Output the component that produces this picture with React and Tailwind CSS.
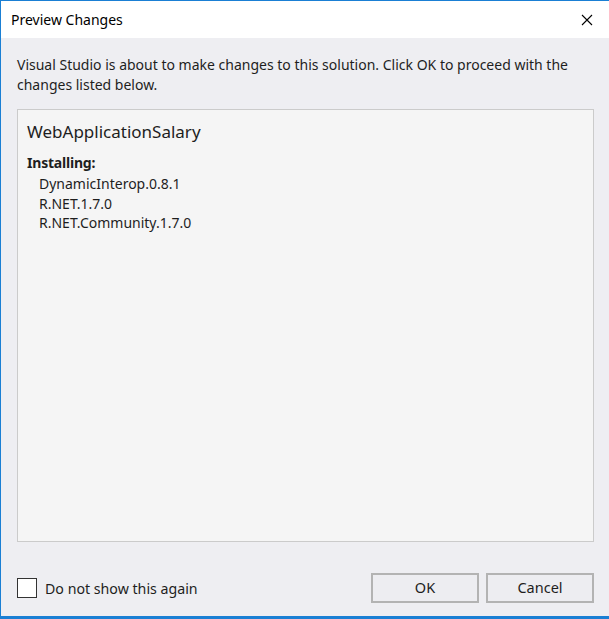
import React from 'react'

const font = { fontFamily: '"Noto Sans", "Open Sans", sans-serif' }

function App() {
  const packages = ['DynamicInterop.0.8.1', 'R.NET.1.7.0', 'R.NET.Community.1.7.0']

  return (
    <div className="w-[609px] h-[619px] overflow-hidden bg-[#eeeef2]">
      <div
        className="flex flex-col h-full border-l border-t border-b-[3px] border-[#1a7fd4] bg-[#eeeef2] text-[#1e1e1e]"
        style={font}
      >
        {/* Title bar */}
        <div className="flex items-center justify-between h-[37px] bg-white pl-[10px] pr-[15px]">
          <span className="text-[14px] text-black">Preview Changes</span>
          <svg width="12" height="12" viewBox="0 0 12 12" className="mr-[1px]">
            <path d="M1 1 L11 11 M11 1 L1 11" stroke="#000" strokeWidth="1.1" />
          </svg>
        </div>

        {/* Body */}
        <div className="flex flex-col flex-1 pl-[16px] pr-[15px] pt-[17px]">
          <p className="text-[14px] leading-[20px] pr-[4px]">
            Visual Studio is about to make changes to this solution. Click OK to proceed with the changes listed below.
          </p>

          <div className="mt-[14px] h-[433px] border border-[#cbcbcb] bg-[#f5f5f5] pl-[9px] pt-[9px]">
            <div className="text-[17px] leading-[25px]">WebApplicationSalary</div>
            <div className="mt-[9px] text-[14px] leading-[20px] font-bold tracking-[-0.2px]">Installing:</div>
            <ul className="pl-[12px] mt-[1px] text-[14px] leading-[19.5px]">
              {packages.map(p => (
                <li key={p}>{p}</li>
              ))}
            </ul>
          </div>

          {/* Footer */}
          <div className="flex items-center justify-between mt-[30px]">
            <label className="flex items-center gap-[8px] mt-[2px]">
              <span className="w-[20px] h-[20px] border border-[#333333] bg-white" />
              <span className="text-[14.2px]">Do not show this again</span>
            </label>
            <div className="flex gap-[7px] mt-[1px]">
              <button className="w-[108px] h-[30px] border-2 border-[#b3b3b3] bg-[#ededf1] text-[14.5px]">OK</button>
              <button className="w-[108px] h-[30px] border-2 border-[#b3b3b3] bg-[#ededf1] text-[14.5px]">Cancel</button>
            </div>
          </div>
        </div>
      </div>
    </div>
  )
}

export default App
